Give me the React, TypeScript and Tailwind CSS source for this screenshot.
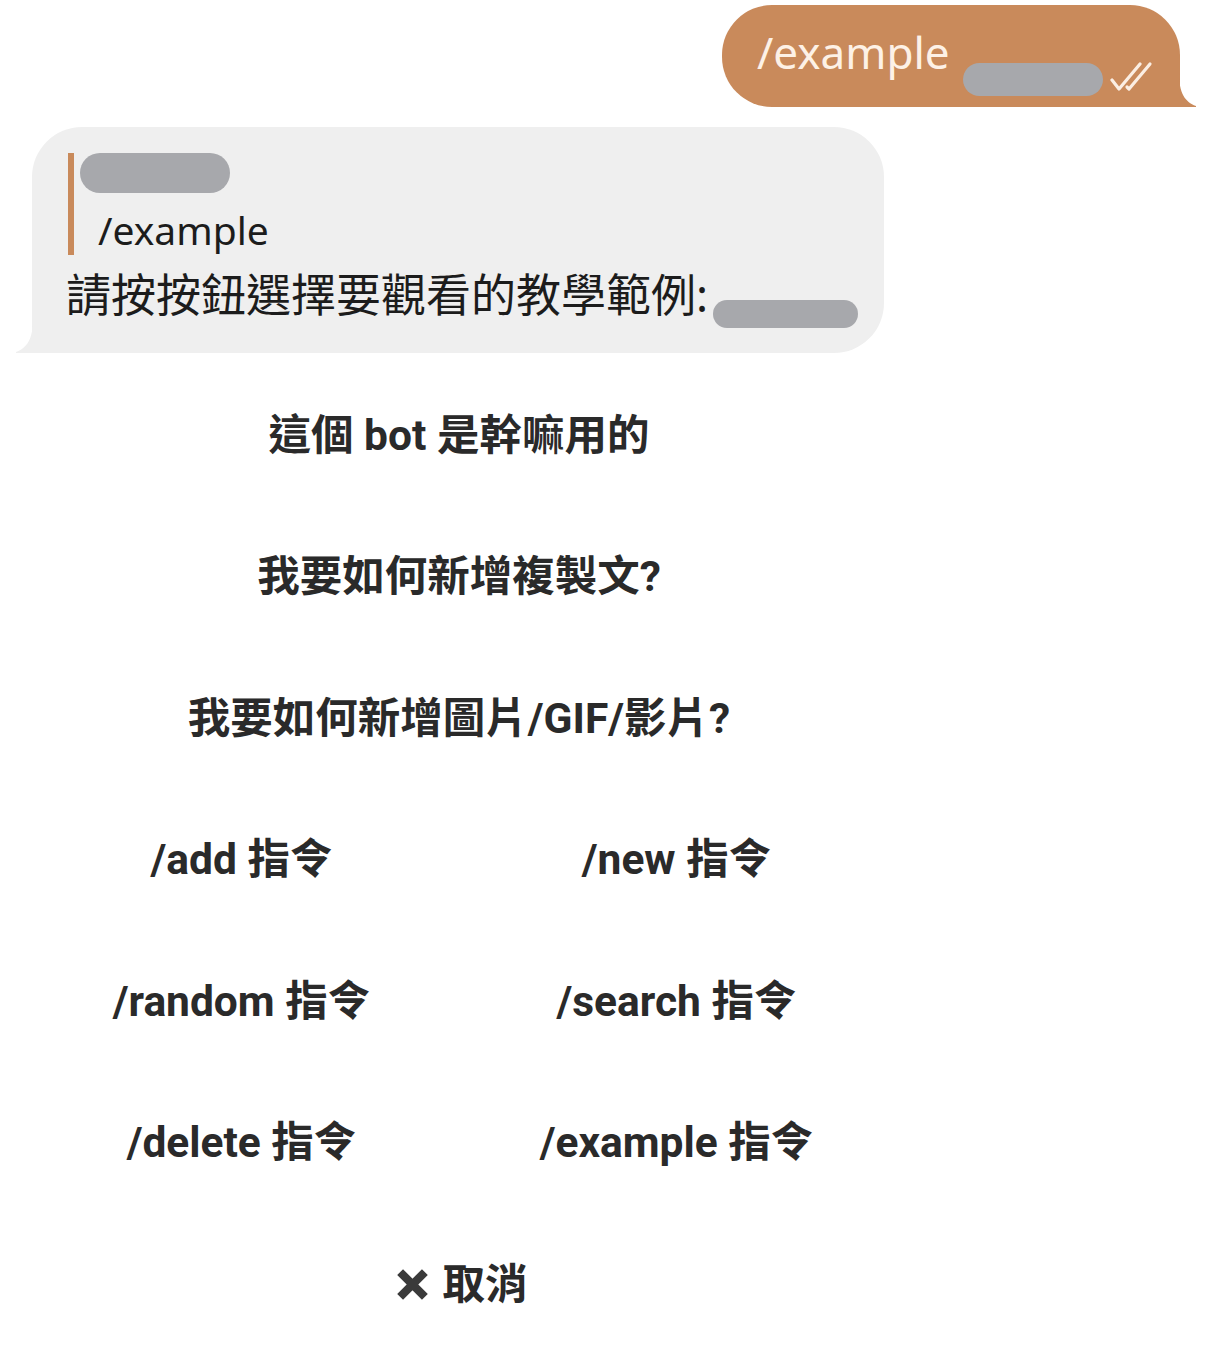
import React from 'react';

const CJK = { fontFamily: 'Roboto, "Noto Sans CJK TC", sans-serif' };
const BODY = { fontFamily: '"Noto Sans", "Noto Sans CJK TC", sans-serif' };

function Pill({ className }: { className: string }) {
  return <span className={`inline-block rounded-full bg-[#a7a8ac] ${className}`} />;
}

function DoubleCheck() {
  return (
    <svg width="50" height="32" viewBox="0 0 50 32" fill="none" stroke="#fbeee3" strokeWidth="3.2" strokeLinecap="round" strokeLinejoin="round">
      <path d="M2 19 L9 28 L30 3" />
      <path d="M17 26 L19 28 L40 3" />
    </svg>
  );
}

function KeyButton({ label, span }: { label: React.ReactNode; span?: boolean }) {
  return (
    <div
      className={`h-[141.5px] flex items-center justify-center text-[42.5px] font-bold text-[#2a2a2a] ${span ? 'col-span-2' : ''}`}
      style={CJK}
    >
      {label}
    </div>
  );
}

export default function App() {
  return (
    <div className="w-[1212px] min-h-[1347px] bg-white overflow-hidden">
      {/* Outgoing message */}
      <div className="flex justify-end pr-[32px] pt-[5px]">
        <div className="relative w-[458px] h-[102px] bg-[#c98a5b] rounded-[50px] rounded-br-none pl-[35px] flex items-center">
          <span className="text-[44px] text-[#fdf1e6] leading-none -mt-[8px]" style={BODY}>/example</span>
          <Pill className="absolute left-[241px] top-[58px] w-[140px] h-[33px]" />
          <div className="absolute left-[388px] top-[56px]">
            <DoubleCheck />
          </div>
          <svg className="absolute -right-[16px] bottom-0" width="17" height="34" viewBox="0 0 17 34">
            <path d="M0 0 C0 20 6 29 17 33 L17 34 L0 34 Z" fill="#c98a5b" />
          </svg>
        </div>
      </div>

      {/* Incoming message */}
      <div className="pl-[32px] pt-[20px]">
        <div className="relative w-[852px] h-[226px] bg-[#efefef] rounded-[50px] rounded-bl-none pl-[36px] pt-[26px]">
          <div className="border-l-[6px] border-[#c98a5b] h-[102px] flex flex-col">
            <Pill className="ml-[6px] w-[150px] h-[40px]" />
            <span className="ml-[24px] mt-[15px] text-[39px] leading-[44px] text-[#1c1c1c]" style={BODY}>/example</span>
          </div>
          <div className="flex items-end mt-[14px]">
            <span className="text-[45px] leading-[52px] text-[#1c1c1c] -ml-[2px]" style={BODY}>請按按鈕選擇要觀看的教學範例:</span>
            <Pill className="ml-[5px] mb-[-7px] w-[145px] h-[28px]" />
          </div>
          <svg className="absolute -left-[16px] bottom-0" width="17" height="34" viewBox="0 0 17 34">
            <path d="M17 0 C17 20 11 29 0 33 L0 34 L17 34 Z" fill="#efefef" />
          </svg>
        </div>
      </div>

      {/* Inline keyboard */}
      <div className="ml-[24px] w-[870px] mt-[12px] grid grid-cols-2">
        <KeyButton span label="這個 bot 是幹嘛用的" />
        <KeyButton span label="我要如何新增複製文?" />
        <KeyButton span label="我要如何新增圖片/GIF/影片?" />
        <KeyButton label="/add 指令" />
        <KeyButton label="/new 指令" />
        <KeyButton label="/random 指令" />
        <KeyButton label="/search 指令" />
        <KeyButton label="/delete 指令" />
        <KeyButton label="/example 指令" />
        <KeyButton
          span
          label={
            <span className="flex items-center gap-[13px] ml-[6px]">
              <svg width="33" height="33" viewBox="0 0 32 32" stroke="#3a3a3a" strokeWidth="8" strokeLinecap="butt">
                <path d="M4 4 L28 28 M28 4 L4 28" />
              </svg>
              <span>取消</span>
            </span>
          }
        />
      </div>
    </div>
  );
}
